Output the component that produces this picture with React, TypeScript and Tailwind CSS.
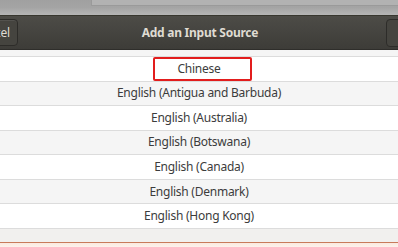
import React from "react";

const rows = [
  "Chinese",
  "English (Antigua and Barbuda)",
  "English (Australia)",
  "English (Botswana)",
  "English (Canada)",
  "English (Denmark)",
  "English (Hong Kong)",
];

export default function App() {
  return (
    <div className="relative w-[398px] h-[247px] overflow-hidden bg-white font-['Noto_Sans',sans-serif]">
      {/* top strip */}
      <div className="h-[15px] flex bg-gradient-to-b from-[#a0a0a0] via-[#a4a4a4] to-[#b6b6b6]">
        <div className="w-[91px]" />
        <div className="flex-1 h-[6px] bg-[#b2b2b2] border-l border-b border-[#9a9a9a]" />
      </div>
      {/* header */}
      <div className="h-[34px] flex items-center bg-gradient-to-b from-[#4d4c47] to-[#3d3c38] border-t border-[#38372f]">
        <div className="ml-[-34px] h-[27px] px-[7px] flex items-center rounded-[4px] border border-[#2d2c29] bg-[#45443f] shadow-[inset_0_1px_0_rgba(255,255,255,0.08)] text-[12px] tracking-[-0.25px] text-[#dfdbd2]">
          Cancel
        </div>
        <div className="flex-1 text-center text-[12px] tracking-[-0.25px] font-bold text-[#dfdbd2] pr-[4px]">
          Add an Input Source
        </div>
        <div className="mr-[-30px] w-[42px] h-[28px] rounded-[4px] border border-[#2d2c29] bg-[#45443f]" />
      </div>
      {/* list */}
      <div className="border-t border-[#2f2e2b]">
        <div className="h-[7px] bg-[#f5f5f5] border-b border-[#dcdcdc]" />
        {rows.map((r, i) => (
          <div
            key={r}
            className={
              (i % 2 === 0 ? "bg-white" : "bg-[#f5f5f5]") +
              " h-[24.57px] border-b border-[#dcdcdc] flex items-center justify-center text-[12px] tracking-[-0.25px] text-[#3c3c3c]"
            }
          >
            {r}
          </div>
        ))}
        <div className="h-[13px] bg-[#f1f0ee]" />
        <div className="h-[1px] bg-[#c87a5a]" />
        <div className="h-[10px] bg-gradient-to-b from-[#fbe9df] to-white" />
      </div>
      {/* red annotation box */}
      <div className="absolute left-[153px] top-[57px] w-[99px] h-[24px] border-2 border-[#e21d1d] rounded-[2px]" />
    </div>
  );
}
